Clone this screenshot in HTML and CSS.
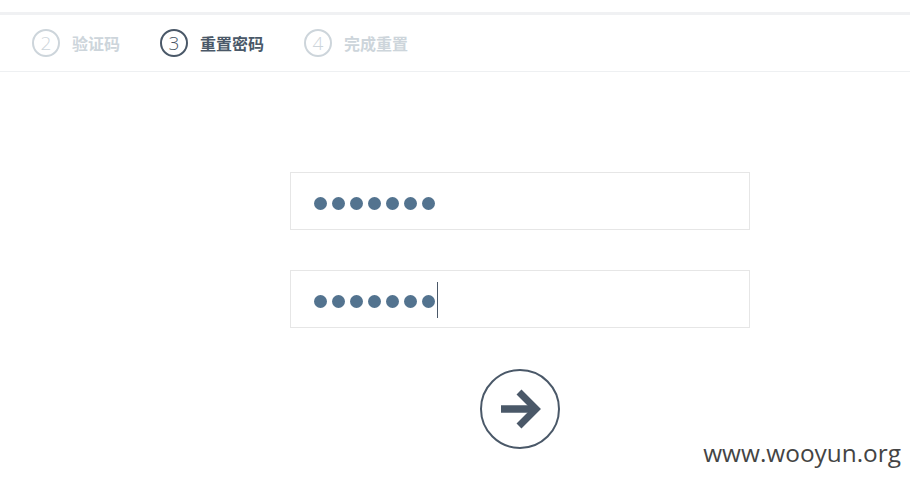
FILE: index.html
```html
<!DOCTYPE html>
<html>
<head>
<meta charset="utf-8">
<link rel="stylesheet" href="styles.css">
</head>
<body>
<div class="stripe"></div>
<nav class="steps">
  <div class="step"><span class="num">2</span><span class="label">验证码</span></div>
  <div class="step active"><span class="num">3</span><span class="label">重置密码</span></div>
  <div class="step"><span class="num">4</span><span class="label">完成重置</span></div>
</nav>
<main class="form">
  <div class="field">
    <span class="dot"></span><span class="dot"></span><span class="dot"></span><span class="dot"></span><span class="dot"></span><span class="dot"></span><span class="dot"></span>
  </div>
  <div class="field">
    <span class="dot"></span><span class="dot"></span><span class="dot"></span><span class="dot"></span><span class="dot"></span><span class="dot"></span><span class="dot"></span><span class="caret"></span>
  </div>
  <div class="actions">
    <button class="go" type="button" aria-label="next">
      <svg width="44" height="44" viewBox="0 0 44 44">
        <path d="M2 22 H34" stroke="#4a5868" stroke-width="7.5" fill="none"/>
        <path d="M20 5 L37 22 L20 39" stroke="#4a5868" stroke-width="7" fill="none" stroke-linejoin="miter"/>
      </svg>
    </button>
  </div>
</main>
<div class="watermark">www.wooyun.org</div>
</body>
</html>
```

FILE: styles.css
```css
html, body {
  margin: 0;
  padding: 0;
  background: #fff;
  font-family: "Noto Sans CJK SC", "Noto Sans", sans-serif;
}
body {
  width: 910px;
  height: 483px;
  position: relative;
  overflow: hidden;
}
.stripe {
  margin-top: 12px;
  height: 3px;
  background: #f0f1f3;
}
.steps {
  height: 56px;
  border-bottom: 1px solid #eef0f2;
  display: flex;
  align-items: center;
  padding-left: 32px;
  gap: 40px;
}
.step {
  display: flex;
  align-items: center;
  gap: 12px;
  color: #cdd5db;
}
.num {
  width: 24px;
  height: 24px;
  border: 2px solid #cdd5db;
  border-radius: 50%;
  display: flex;
  align-items: center;
  justify-content: center;
  font-family: "Open Sans", sans-serif;
  font-size: 19px;
  font-weight: 300;
  line-height: 1;
}
.label {
  font-size: 16px;
  font-weight: 700;
  line-height: 1;
}
.step.active { color: #4a5868; }
.step.active .num { border-color: #4a5868; }
.form {
  margin: 100px 0 0 290px;
  width: 460px;
  display: flex;
  flex-direction: column;
  gap: 40px;
}
.field {
  border: 1px solid #e6e6e6;
  display: flex;
  align-items: center;
  padding: 4px 0 0 23px;
  box-sizing: border-box;
  height: 58px;
  gap: 5px;
}
.dot {
  width: 13px;
  height: 13px;
  border-radius: 50%;
  background: #53738f;
}
.caret {
  width: 1px;
  height: 36px;
  background: #4a5868;
  margin-left: -3px;
  margin-top: -2px;
}
.actions {
  display: flex;
  justify-content: center;
  margin-top: 1px;
}
.go {
  width: 80px;
  height: 80px;
  border: 2px solid #4a5868;
  border-radius: 50%;
  background: #fff;
  padding: 0;
  display: flex;
  align-items: center;
  justify-content: center;
  cursor: pointer;
}
.go svg { margin-left: 2px; }
.watermark {
  position: absolute;
  right: 9px;
  top: 438px;
  font-family: "Open Sans", sans-serif;
  font-size: 24.4px;
  color: #444;
  line-height: 30px;
}
```
